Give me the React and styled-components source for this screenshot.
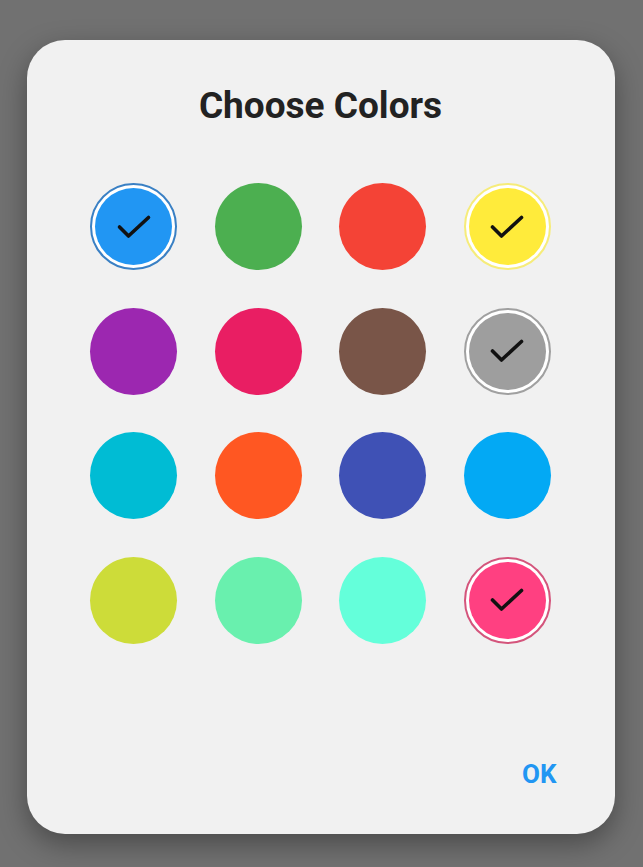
import React from 'react';
import styled, {createGlobalStyle} from 'styled-components';

const colors = [
    {c: '#2196F3', ring: '#3a80c4', on: true},
    {c: '#4CAF50'},
    {c: '#F44336'},
    {c: '#FFEB3B', ring: '#f6ec7a', on: true},
    {c: '#9C27B0'},
    {c: '#E91E63'},
    {c: '#795548'},
    {c: '#9E9E9E', ring: '#a0a0a0', on: true},
    {c: '#00BCD4'},
    {c: '#FF5722'},
    {c: '#3F51B5'},
    {c: '#03A9F4'},
    {c: '#CDDC39'},
    {c: '#69F0AE'},
    {c: '#64FFDA'},
    {c: '#FF4081', ring: '#d4557c', on: true},
];

function Check() {
    return (
        <svg width="36" height="26" viewBox="0 0 36 26">
            <path d="M3.5 13 L12.5 22 L32.5 3.5" fill="none" stroke="#111" strokeWidth="3.6"
                  strokeLinecap="round" strokeLinejoin="round"/>
        </svg>
    );
}

function App() {
    return (
        <Page>
            <Global/>
            <Dialog>
                <Title>Choose Colors</Title>
                <Grid>
                    {colors.map((item, i) => (
                        <Swatch key={i} $ring={item.on ? item.ring : null}>
                            <Fill $color={item.c}>
                                {item.on && <Check/>}
                            </Fill>
                        </Swatch>
                    ))}
                </Grid>
                <Actions>
                    <OkButton>OK</OkButton>
                </Actions>
            </Dialog>
        </Page>
    );
}

const Global = createGlobalStyle`
  html, body {
    margin: 0;
    padding: 0;
    background: #717171;
  }
  body {
    font-family: Roboto, "Liberation Sans", sans-serif;
  }
`;

const Page = styled.div`
  width: 643px;
  height: 867px;
  display: flex;
  justify-content: center;
  align-items: flex-start;
  padding-top: 40px;
  box-sizing: border-box;
  background: #717171;
`;

const Dialog = styled.div`
  width: 588px;
  height: 794px;
  margin-left: -2px;
  box-sizing: border-box;
  background: #f1f1f1;
  border-radius: 38px;
  box-shadow: 0 10px 28px rgba(0, 0, 0, 0.35);
  display: flex;
  flex-direction: column;
  align-items: center;
`;

const Title = styled.h1`
  margin: 45px 0 0;
  font-size: 37px;
  line-height: 42px;
  font-weight: 700;
  color: #222;
`;

const Grid = styled.div`
  margin-top: 56px;
  display: grid;
  grid-template-columns: repeat(4, 87px);
  grid-auto-rows: 87px;
  column-gap: 37.5px;
  row-gap: 37.5px;
`;

const Swatch = styled.div`
  width: 87px;
  height: 87px;
  box-sizing: border-box;
  border-radius: 50%;
  display: flex;
  align-items: center;
  justify-content: center;
  border: ${p => p.$ring ? `2px solid ${p.$ring}` : 'none'};
  padding: ${p => p.$ring ? '3px' : '0'};
  background: ${p => p.$ring ? '#fff' : 'transparent'};
`;

const Fill = styled.div`
  width: 100%;
  height: 100%;
  border-radius: 50%;
  background: ${p => p.$color};
  display: flex;
  align-items: center;
  justify-content: center;
`;

const Actions = styled.div`
  margin-top: auto;
  align-self: stretch;
  display: flex;
  justify-content: flex-end;
  padding: 0 58px 45px 0;
`;

const OkButton = styled.div`
  color: #2196F3;
  font-size: 26px;
  font-weight: 700;
  line-height: 30px;
  cursor: pointer;
`;

export default App;
